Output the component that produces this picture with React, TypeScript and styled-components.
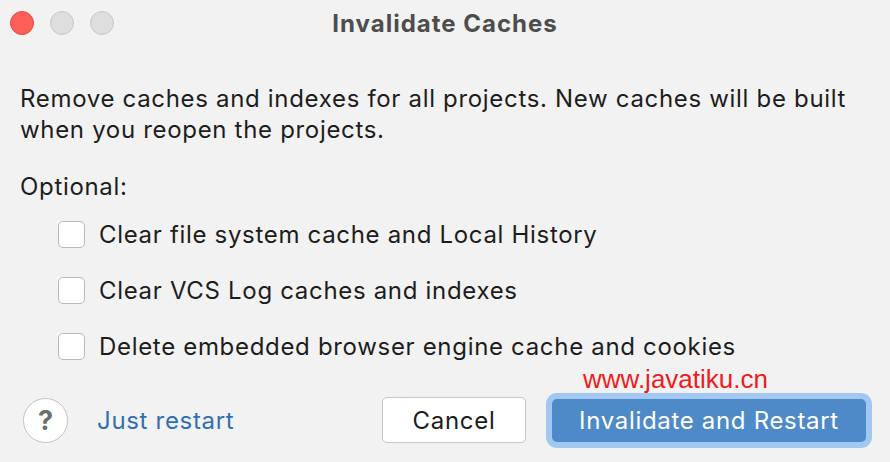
import React from 'react';
import styled, { createGlobalStyle } from 'styled-components';

const GlobalStyle = createGlobalStyle`
  html, body {
    margin: 0;
    padding: 0;
    background: #f2f2f2;
  }
  body {
    font-family: Inter, "Noto Sans", "Liberation Sans", sans-serif;
    color: #1d1d1d;
  }
`;

const Dialog = styled.div`
  position: relative;
  width: 890px;
  height: 462px;
  background: #f2f2f2;
  display: flex;
  flex-direction: column;
  box-sizing: border-box;
  overflow: hidden;
  font-size: 24px;
  letter-spacing: 0.68px;
`;

const TitleBar = styled.div`
  position: relative;
  height: 46px;
  display: flex;
  align-items: center;
  justify-content: center;
`;

const Lights = styled.div`
  position: absolute;
  left: 10px;
  top: 11px;
  display: flex;
  gap: 16px;
`;

const Light = styled.span<{ $red?: boolean }>`
  width: 24px;
  height: 24px;
  border-radius: 50%;
  box-sizing: border-box;
  background: ${p => (p.$red ? '#fe5f57' : '#dedede')};
  border: 1px solid ${p => (p.$red ? '#e14942' : '#c8c8c8')};
`;

const Title = styled.h1`
  margin: 0;
  font-size: 24px;
  font-weight: 700;
  letter-spacing: 1px;
  color: #4d4d4d;
`;

const Body = styled.div`
  padding: 37px 20px 0 20px;
  line-height: 31px;
`;

const Message = styled.p`
  margin: 0;
`;

const Optional = styled.p`
  margin: 26px 0 0 0;
`;

const Options = styled.div`
  display: flex;
  flex-direction: column;
  gap: 25px;
  margin-top: 17px;
  padding-left: 38px;
`;

const OptionRow = styled.label`
  display: flex;
  align-items: center;
  gap: 14px;
  height: 31px;
`;

const Box = styled.span`
  width: 27px;
  height: 27px;
  box-sizing: border-box;
  background: #ffffff;
  border: 1.5px solid #b9b9b9;
  border-radius: 5px;
`;

const Footer = styled.div`
  margin-top: auto;
  padding: 0 18px 19px 23px;
  display: flex;
  align-items: center;
`;

const HelpButton = styled.button`
  width: 45px;
  height: 45px;
  border-radius: 50%;
  border: 1.5px solid #c4c4c4;
  background: #ffffff;
  color: #6e6e6e;
  font-family: inherit;
  font-size: 27px;
  font-weight: 700;
  padding: 0;
  display: flex;
  align-items: center;
  justify-content: center;
`;

const LinkButton = styled.a`
  margin-left: 29px;
  color: #2f6fb4;
`;

const Spacer = styled.div`
  flex: 1;
`;

const Button = styled.button<{ $primary?: boolean }>`
  box-sizing: border-box;
  height: ${p => (p.$primary ? '43px' : '46px')};
  padding: 0;
  width: ${p => (p.$primary ? '314px' : '144px')};
  font-family: inherit;
  font-size: 24px;
  letter-spacing: 0.68px;
  border-radius: 5px;
  color: ${p => (p.$primary ? '#ffffff' : '#1d1d1d')};
  background: ${p => (p.$primary ? '#4f8ac8' : '#ffffff')};
  border: ${p => (p.$primary ? 'none' : '1.5px solid #c6c6c6')};
  box-shadow: ${p => (p.$primary ? '0 0 0 6px #a2c8f2' : 'none')};
  margin-left: ${p => (p.$primary ? '26px' : '0')};
  margin-right: ${p => (p.$primary ? '6px' : '0')};
`;

const Watermark = styled.span`
  position: absolute;
  left: 583px;
  top: 364px;
  font-family: "Liberation Sans", Arial, sans-serif;
  font-size: 26px;
  letter-spacing: 0;
  color: #ee1c1c;
  pointer-events: none;
`;

const options = [
  'Clear file system cache and Local History',
  'Clear VCS Log caches and indexes',
  'Delete embedded browser engine cache and cookies',
];

const App: React.FC = () => {
  return (
    <Dialog>
      <GlobalStyle />
      <TitleBar>
        <Lights>
          <Light $red />
          <Light />
          <Light />
        </Lights>
        <Title>Invalidate Caches</Title>
      </TitleBar>
      <Body>
        <Message>
          Remove caches and indexes for all projects. New caches will be built
          <br />
          when you reopen the projects.
        </Message>
        <Optional>Optional:</Optional>
        <Options>
          {options.map(text => (
            <OptionRow key={text}>
              <Box />
              {text}
            </OptionRow>
          ))}
        </Options>
      </Body>
      <Footer>
        <HelpButton>?</HelpButton>
        <LinkButton>Just restart</LinkButton>
        <Spacer />
        <Button>Cancel</Button>
        <Button $primary>Invalidate and Restart</Button>
      </Footer>
      <Watermark>www.javatiku.cn</Watermark>
    </Dialog>
  );
};

export default App;
